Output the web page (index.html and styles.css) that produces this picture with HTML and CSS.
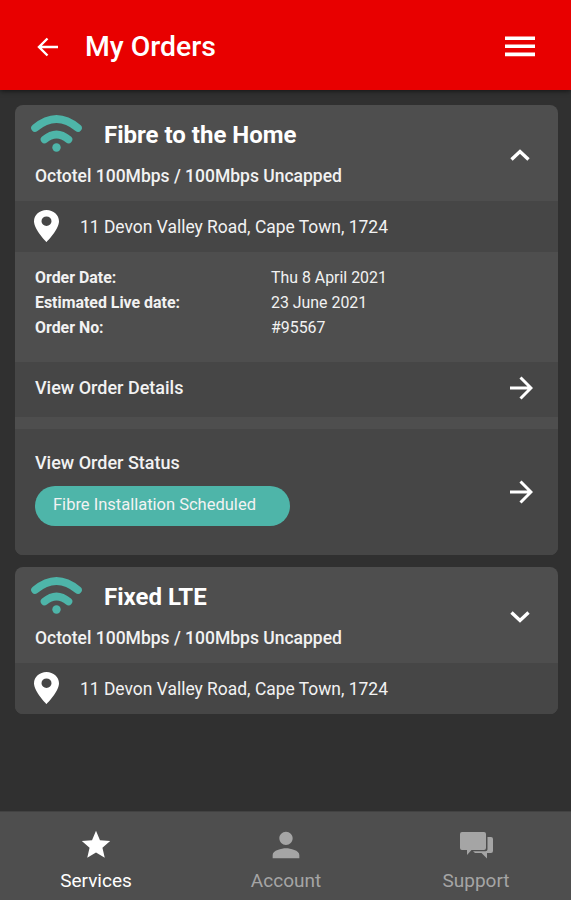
FILE: index.html
```html
<!DOCTYPE html>
<html lang="en">
<head>
    <meta charset="UTF-8">
    <meta name="viewport" content="width=device-width, initial-scale=1.0">
    <title>My Orders</title>
    <link rel="stylesheet" href="styles.css">
</head>
<body>

    <header class="topbar">
        <svg class="back" viewBox="0 0 22 20" width="22" height="20"><path d="M21 10H2M10.5 1.5L2 10l8.5 8.5"/></svg>
        <h1>My Orders</h1>
        <svg class="burger" viewBox="0 0 30 21" width="30" height="21"><path d="M0 2.2h30M0 10.2h30M0 18.4h30"/></svg>
    </header>

    <main class="orders">
        <section class="card">
            <div class="card-head">
                <div class="card-title">
                    <svg class="wifi" viewBox="0 0 52 38" width="52" height="38">
                        <path d="M4 14Q25.500-4 47 14"/>
                        <path d="M13.500 25.500Q25.500 15.500 37.500 25.500"/>
                        <circle cx="25.500" cy="33.500" r="4.200"/>
                    </svg>
                    <h2>Fibre to the Home</h2>
                </div>
                <p class="plan">Octotel 100Mbps / 100Mbps Uncapped</p>
                <svg class="chevron" viewBox="0 0 20 12" width="20" height="12"><path d="M1.5 10.5L10 2.5l8.500 8"/></svg>
            </div>

            <div class="address">
                <svg class="pin" viewBox="5 2 14 20" preserveAspectRatio="none"><path d="M12 2C8.130 2 5 5.130 5 9c0 5.250 7 13 7 13s7-7.750 7-13c0-3.870-3.130-7-7-7zm0 10a2.800 3 0 1 1 0-6 2.800 3 0 0 1 0 6z"/></svg>
                <span>11 Devon Valley Road, Cape Town, 1724</span>
            </div>

            <dl class="details">
                <dt>Order Date:</dt><dd>Thu 8 April 2021</dd>
                <dt>Estimated Live date:</dt><dd>23 June 2021</dd>
                <dt>Order No:</dt><dd>#95567</dd>
            </dl>

            <a class="row row-details">
                <span class="row-label">View Order Details</span>
                <svg class="arrow" viewBox="0 0 24 24" width="24" height="24"><path d="M1 12h21M11.500 1.500L22 12 11.500 22.500"/></svg>
            </a>

            <a class="row row-status">
                <div class="status">
                    <span class="row-label">View Order Status</span>
                    <span class="pill">Fibre Installation Scheduled</span>
                </div>
                <svg class="arrow" viewBox="0 0 24 24" width="24" height="24"><path d="M1 12h21M11.500 1.500L22 12 11.500 22.500"/></svg>
            </a>
        </section>

        <section class="card">
            <div class="card-head">
                <div class="card-title">
                    <svg class="wifi" viewBox="0 0 52 38" width="52" height="38">
                        <path d="M4 14Q25.500-4 47 14"/>
                        <path d="M13.500 25.500Q25.500 15.500 37.500 25.500"/>
                        <circle cx="25.500" cy="33.500" r="4.200"/>
                    </svg>
                    <h2>Fixed LTE</h2>
                </div>
                <p class="plan">Octotel 100Mbps / 100Mbps Uncapped</p>
                <svg class="chevron" viewBox="0 0 20 12" width="20" height="12"><path d="M1.5 1.500L10 9.500l8.500-8"/></svg>
            </div>

            <div class="address">
                <svg class="pin" viewBox="5 2 14 20" preserveAspectRatio="none"><path d="M12 2C8.130 2 5 5.130 5 9c0 5.250 7 13 7 13s7-7.750 7-13c0-3.870-3.130-7-7-7zm0 10a2.800 3 0 1 1 0-6 2.800 3 0 0 1 0 6z"/></svg>
                <span>11 Devon Valley Road, Cape Town, 1724</span>
            </div>
        </section>
    </main>

    <nav class="tabs">
        <a class="tab active">
            <svg viewBox="0 0 24 24" width="34" height="34"><path d="M12 17.270L18.180 21l-1.640-7.030L22 9.240l-7.190-.61L12 2 9.190 8.630 2 9.240l5.460 4.730L5.820 21z"/></svg>
            <span>Services</span>
        </a>
        <a class="tab">
            <svg viewBox="0 0 24 24" width="40" height="40"><path d="M12 12c2.210 0 4-1.790 4-4s-1.790-4-4-4-4 1.790-4 4 1.790 4 4 4zm0 2c-2.670 0-8 1.340-8 4v2h16v-2c0-2.660-5.330-4-8-4z"/></svg>
            <span>Account</span>
        </a>
        <a class="tab">
            <svg viewBox="0 0 33 27" width="33" height="27"><path d="M2 0h22q2 0 2 2v14q0 2-2 2H11.500L7 23V18H2q-2 0-2-2V2Q0 0 2 0z"/><path d="M27.500 5H31q2 0 2 2v12q0 2-2 2h-4v5.500L21.500 21H15l-2-1.700h12.500q2 0 2-2z"/></svg>
            <span>Support</span>
        </a>
    </nav>

</body>
</html>
```
FILE: styles.css
```css
* {
    box-sizing: border-box;
}

body {
    margin: 0;
    height: 900px;
    display: flex;
    flex-direction: column;
    overflow: hidden;
    font-family: Roboto, sans-serif;
    background-color: #303030;
    color: #f2f2f2;
    white-space: nowrap;
}

h1, h2, p, dl, dd {
    margin: 0;
}

svg {
    flex: none;
    fill: currentColor;
}

/* Red top bar */
.topbar {
    display: flex;
    align-items: center;
    height: 90px;
    flex: none;
    padding: 4px 36px 0 37px;
    background-color: #e80000;
    color: white;
    box-shadow: 0 1px 5px rgba(0, 0, 0, 0.6);
}

.topbar h1 {
    margin-left: 26px;
    font-size: 28.4px;
    font-weight: 500;
    line-height: 34px;
}

.back, .burger, .chevron, .arrow {
    fill: none;
    stroke: white;
    stroke-width: 2.4;
}

.burger {
    margin-left: auto;
    margin-bottom: 1px;
    stroke-width: 3.6;
}

/* Order cards */
.orders {
    flex: 1;
    display: flex;
    flex-direction: column;
    gap: 12px;
    padding: 15px 13.5px 0 15px;
}

.card {
    background-color: #4e4e4e;
    border-radius: 8px;
    overflow: hidden;
}

.card-head {
    display: grid;
    grid-template-columns: 1fr auto;
    grid-template-rows: 56px 39px;
    height: 95.5px;
    padding: 0 28px 0 16px;
}

.card-title {
    display: flex;
    padding-top: 9px;
}

.card-title h2 {
    margin-left: 21px;
    padding-top: 6px;
    font-size: 24px;
    font-weight: 700;
    line-height: 30px;
    color: white;
}

.wifi {
    color: #4eb5a9;
}

.wifi path {
    fill: none;
    stroke: currentColor;
    stroke-width: 7.6;
    stroke-linecap: round;
}

.plan {
    grid-row: 2;
    padding: 5px 0 0 4px;
    font-size: 17.5px;
    font-weight: 500;
    line-height: 20px;
}

.chevron {
    grid-column: 2;
    grid-row: 1 / 3;
    align-self: center;
    margin-top: 5px;
    stroke-width: 3.4;
}

.address {
    display: flex;
    align-items: center;
    gap: 21px;
    height: 51.5px;
    padding: 0 20px 0 19px;
    background-color: #464646;
    font-size: 17.45px;
}

.address span {
    padding-top: 2px;
}

.pin {
    width: 25px;
    height: 32px;
    color: white;
    fill-rule: evenodd;
}

.details {
    display: grid;
    grid-template-columns: 236px 1fr;
    grid-auto-rows: 25px;
    align-content: start;
    height: 110px;
    padding: 13px 20px 0;
    font-size: 15.9px;
    line-height: 25px;
}

.details dt {
    font-weight: 700;
}

.row {
    display: flex;
    align-items: center;
    justify-content: space-between;
    padding: 0 25px 0 20px;
    background-color: #464646;
}

.row-details {
    height: 55px;
    margin-bottom: 12px;
    padding-bottom: 4px;
}

.row-status {
    height: 126px;
}

.status {
    padding-bottom: 7px;
}

.row-label {
    display: block;
    font-size: 18px;
    font-weight: 500;
    line-height: 22px;
}

.arrow {
    stroke-width: 3;
}

.pill {
    display: block;
    width: 255px;
    height: 40px;
    margin-top: 12px;
    padding-left: 18px;
    border-radius: 20px;
    background-color: #4eb5a9;
    font-size: 16.5px;
    line-height: 38px;
}

/* Bottom navigation */
.tabs {
    display: flex;
    height: 89px;
    flex: none;
    padding-left: 1px;
    background-color: #4e4e4e;
    border-top: 1px solid #424242;
}

.tab {
    flex: 1;
    display: grid;
    grid-template-rows: 56px 24px;
    align-content: start;
    justify-items: center;
    align-items: center;
    padding-top: 5px;
    font-size: 19px;
    color: #a5a5a5;
}

.tab span {
    margin-top: -10px;
}

.active {
    color: white;
}
```
